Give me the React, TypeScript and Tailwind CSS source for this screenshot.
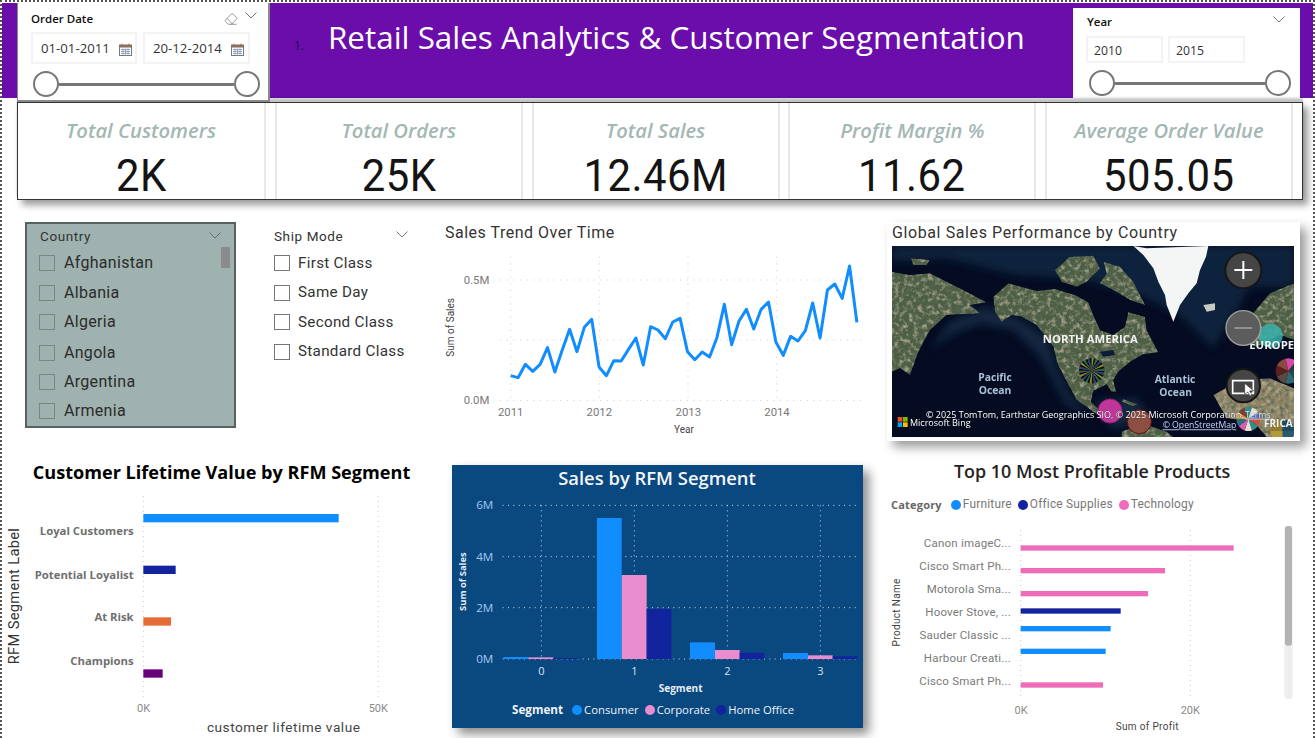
import { Eraser } from "lucide-react";

const din = "font-['Roboto',sans-serif]";
const seg = "font-['Open_Sans',sans-serif]";

const trend = [497, 503, 463, 484, 463, 413, 486, 420, 358, 425, 352, 328, 471, 497, 452, 453, 418, 384, 465, 350, 360, 386, 336, 325, 425, 449, 426, 441, 383, 283, 404, 333, 298, 357, 298, 276, 396, 436, 379, 393, 362, 279, 384, 240, 222, 265, 168, 337];

const kpis = [
  { title: "Total Customers", value: "2K" },
  { title: "Total Orders", value: "25K" },
  { title: "Total Sales", value: "12.46M" },
  { title: "Profit Margin %", value: "11.62" },
  { title: "Average Order Value", value: "505.05" },
];

function Calendar() {
  return (
    <svg width="13" height="13" viewBox="0 0 13 13" className="shrink-0">
      <rect x="0.5" y="2" width="12" height="10.5" fill="#fff" stroke="#777" />
      <rect x="0.5" y="2" width="12" height="2.5" fill="#8a6d5a" />
      <path d="M3 0.5v2M10 0.5v2" stroke="#b5762f" />
      <path d="M2 6.5h9M2 8.5h9M2 10.5h9M4 5.5v6M6.5 5.5v6M9 5.5v6" stroke="#7d95b5" strokeWidth="0.8" />
    </svg>
  );
}

function Thumb() {
  return <div className="w-[26px] h-[26px] rounded-full bg-white border-2 border-[#777] shrink-0" />;
}

function RangeSlider({ width }: { width: number }) {
  return (
    <div className="flex items-center relative" style={{ width }}>
      <Thumb />
      <div className="flex-1 h-[3px] bg-[#777]" />
      <Thumb />
    </div>
  );
}

function Chevron({ className }: { className?: string }) {
  return (
    <svg width="12" height="7" viewBox="0 0 12 7" className={`shrink-0 ${className ?? ""}`}>
      <path d="M0.5 0.5L6 6L11.5 0.5" fill="none" stroke="currentColor" strokeWidth="0.8" />
    </svg>
  );
}

function Header() {
  return (
    <div className="flex h-[95px] mt-px bg-[#6a0dab] items-start">
      <div className="ml-[15px] w-[253px] h-[99px] bg-white border-r-2 border-b-2 border-l border-[#8a8a8a] shrink-0 relative z-10">
        <div className="flex items-center pl-[13px] pr-[11px] pt-[5px] h-[26px]">
          <span className={`${seg} text-[11.5px] font-semibold text-[#111]`}>Order Date</span>
          <Eraser size={14} strokeWidth={1} className="ml-auto text-[#555] mt-[1px]" />
          <Chevron className="ml-[7px] mb-[7px] text-[#555]" />
        </div>
        <div className="flex gap-[6px] pl-[13px] mt-[3px]">
          <div className={`${seg} w-[106px] h-[32px] border-2 border-[#f3f3f3] flex items-center pl-[8px] pt-[2px] gap-[9px] text-[13.2px] text-[#333]`}>
            <span>01-01-2011</span>
            <Calendar />
          </div>
          <div className={`${seg} w-[107px] h-[32px] border-2 border-[#f3f3f3] flex items-center pl-[8px] pt-[2px] gap-[9px] text-[13.2px] text-[#333]`}>
            <span>20-12-2014</span>
            <Calendar />
          </div>
        </div>
        <div className="pl-[15px] mt-[7px]">
          <RangeSlider width={227} />
        </div>
      </div>
      <div className="flex-1 relative h-full flex items-start">
        <span className={`${seg} absolute left-[24px] top-[34px] text-[12px] text-[#1e1040]`}>1.</span>
        <h1 className={`font-['Open_Sans',sans-serif] font-normal text-[31.4px] leading-[46px] text-white mt-[11px] ml-[58px] whitespace-nowrap`}>
          Retail Sales Analytics &amp; Customer Segmentation
        </h1>
      </div>
      <div className="mr-[13px] mt-[5px] w-[227px] h-[90px] bg-white shrink-0">
        <div className="flex items-center pl-[14px] pr-[15px] pt-[3px] h-[24px]">
          <span className={`${seg} text-[11.5px] font-semibold text-[#111]`}>Year</span>
          <Chevron className="ml-auto mb-[5px] text-[#555]" />
        </div>
        <div className="flex gap-[5px] pl-[13px] mt-[4px]">
          <div className={`${seg} w-[77px] h-[27px] border-2 border-[#f3f3f3] flex items-center pl-[6px] pt-[3px] text-[12.2px] text-[#333]`}>2010</div>
          <div className={`${seg} w-[77px] h-[27px] border-2 border-[#f3f3f3] flex items-center pl-[6px] pt-[3px] text-[12.2px] text-[#333]`}>2015</div>
        </div>
        <div className="pl-[16px] mt-[7px]">
          <RangeSlider width={202} />
        </div>
      </div>
    </div>
  );
}

function KpiStrip() {
  return (
    <div className="relative mt-[4px] ml-[15px] w-[1286px] h-[98px] bg-white border border-[#333] flex gap-[8.75px] shadow-[5px_5px_7px_rgba(0,0,0,0.4),0_-4px_2px_rgba(0,0,0,0.22)]">
      {kpis.map((k, i) => (
        <div
          key={k.title}
          className={`w-[248px] flex flex-col items-center border-r-2 border-[#e8e8e8] ${i > 0 ? "border-l-2" : ""}`}
        >
          <div className={`${seg} italic font-semibold text-[20.2px] leading-[26px] mt-[14px] text-[#a3b7b3] whitespace-nowrap`}>
            {k.title}
          </div>
          <div className={`${din} text-[45px] leading-[46px] mt-[10px] text-[#141414] tracking-[0.5px] scale-x-[0.93]`}>{k.value}</div>
        </div>
      ))}
    </div>
  );
}

function Box({ className }: { className: string }) {
  return <div className={`w-[16px] h-[16px] border shrink-0 ${className}`} />;
}

function CountrySlicer() {
  const rows: [string, number][] = [
    ["Afghanistan", 0],
    ["Albania", 30],
    ["Algeria", 59],
    ["Angola", 90],
    ["Argentina", 119],
    ["Armenia", 148],
  ];
  return (
    <div className="relative ml-[23px] w-[211px] h-[206px] bg-[#9fb2af] border-2 border-[#56625f] shrink-0">
      <div className="flex items-center h-[24px] pl-[13px] pr-[13px] pt-[1px]">
        <span className={`${din} text-[13.5px] tracking-[0.6px] text-[#333]`}>Country</span>
        <Chevron className="ml-auto mb-[3px] text-[#56625f]" />
      </div>
      <div className="absolute right-[4px] top-[23px] w-[9px] h-[21px] bg-[#8b8b8b]" />
      {rows.map(([name, y]) => (
        <div key={name} className="absolute left-[12px] flex items-center gap-[9px] h-[20px]" style={{ top: y + 29 }}>
          <Box className="border-[#7d8583]" />
          <span className={`${din} text-[16px] tracking-[0.3px] text-[#2b2b2b]`}>{name}</span>
        </div>
      ))}
    </div>
  );
}

function ShipSlicer() {
  return (
    <div className="ml-[38px] w-[141px] shrink-0 flex flex-col">
      <div className="flex items-center h-[28px] pr-[7px]">
        <span className={`${din} text-[13.5px] tracking-[0.6px] text-[#333]`}>Ship Mode</span>
        <Chevron className="ml-auto mb-[3px] text-[#555]" />
      </div>
      <div className="flex flex-col gap-[9.6px] mt-[3px]">
        {["First Class", "Same Day", "Second Class", "Standard Class"].map((s) => (
          <div key={s} className="flex items-center gap-[8px] h-[20px]">
            <Box className="border-[#777]" />
            <span className={`${din} text-[15.2px] tracking-[0.3px] text-[#333] whitespace-nowrap`}>{s}</span>
          </div>
        ))}
      </div>
    </div>
  );
}

function TrendChart() {
  const pts = trend.map((y, i) => `${242 + i * 22.1},${y}`).join(" ");
  const font = { fontFamily: "Roboto, sans-serif" };
  return (
    <div className="ml-[15px] w-[450px] shrink-0">
      <div className={`${din} pl-[15px] pt-px h-[20px] text-[16px] leading-[20px] tracking-[0.5px] text-[#333]`}>Sales Trend Over Time</div>
      <svg width="450" height="206" viewBox="0 96 1350 618" className="block">
        {[242, 508, 774, 1040].map((x) => (
          <line key={x} x1={x} x2={x} y1="140" y2="570" stroke="#ccc" strokeWidth="3" strokeDasharray="3 17" />
        ))}
        {[210, 390, 571].map((y) => (
          <line key={y} x1="210" x2="1305" y1={y} y2={y} stroke="#ccc" strokeWidth="3" strokeDasharray="3 17" />
        ))}
        <polyline points={pts} fill="none" stroke="#118dff" strokeWidth="9" strokeLinejoin="round" />
        <g style={font} fontSize="34" fill="#777">
          <text x="178" y="221" textAnchor="end">0.5M</text>
          <text x="178" y="582" textAnchor="end">0.0M</text>
          <text x="242" y="617" textAnchor="middle">2011</text>
          <text x="508" y="617" textAnchor="middle">2012</text>
          <text x="775" y="617" textAnchor="middle">2013</text>
          <text x="1041" y="617" textAnchor="middle">2014</text>
        </g>
        <text x="762" y="668" textAnchor="middle" style={font} fontSize="30" fill="#444">Year</text>
        <text transform="translate(72,352) rotate(-90)" textAnchor="middle" style={font} fontSize="30" fill="#444">Sum of Sales</text>
      </svg>
    </div>
  );
}

function Pie({ cx, cy, r, colors }: { cx: number; cy: number; r: number; colors: string[] }) {
  const n = colors.length;
  return (
    <g>
      {colors.map((c, i) => {
        const a0 = (i / n) * Math.PI * 2;
        const a1 = ((i + 1) / n) * Math.PI * 2;
        const d = `M${cx},${cy}L${cx + r * Math.cos(a0)},${cy + r * Math.sin(a0)}A${r},${r} 0 0 1 ${cx + r * Math.cos(a1)},${cy + r * Math.sin(a1)}Z`;
        return <path key={i} d={d} fill={c} />;
      })}
    </g>
  );
}

function MapView() {
  const usColors = Array.from({ length: 36 }, (_, i) => ["#0b0b0b", "#2c3a8a", "#0b0b0b", "#8a8a2a", "#0b0b0b", "#1f6b4a"][i % 6]);
  const mapText = { fontFamily: "Open Sans, sans-serif" };
  return (
    <svg width="402" height="191" viewBox="36 93 1206 573" className="block">
      <defs>
        <filter id="land" x="0" y="0" width="100%" height="100%">
          <feTurbulence type="fractalNoise" baseFrequency="0.07" numOctaves="4" seed="4" result="n" />
          <feColorMatrix in="n" values="0 0 0 0 0.08  0 0 0 0 0.12  0 0 0 0 0.08  2.4 0 0 0 -1.05" result="dark" />
          <feColorMatrix in="n" values="0 0 0 0 0.52  0 0 0 0 0.5  0 0 0 0 0.36  0 2 0 0 -0.95" result="tan" />
          <feMerge result="m">
            <feMergeNode in="SourceGraphic" />
            <feMergeNode in="tan" />
            <feMergeNode in="dark" />
          </feMerge>
          <feComposite in="m" in2="SourceGraphic" operator="in" />
          <feGaussianBlur stdDeviation="1.2" />
        </filter>
        <filter id="soft">
          <feGaussianBlur stdDeviation="12" />
        </filter>
        <filter id="tiny">
          <feGaussianBlur stdDeviation="1.5" />
        </filter>
      </defs>
      <rect x="36" y="93" width="1206" height="573" fill="#050c22" />
      <g filter="url(#soft)" fill="#17344f">
        <path d="M36 93H1242V215H1110L1000 400 900 300 780 240 600 190 400 180 200 130 36 140Z" opacity="0.6" />
        <path d="M320 275L420 315 500 365 525 445 570 540 630 600 560 570 480 425 400 345 300 325 220 355 150 405 210 320Z" opacity="0.7" />
        <path d="M640 560L770 550 810 610 700 640Z" opacity="0.7" />
      </g>
      <g filter="url(#land)" fill="#4e5f43">
        <path d="M36 170L90 180 150 175 230 215 320 262 270 270 300 295 200 300 150 345 115 410 90 480 60 460 36 470Z" />
        <path d="M340 245L385 205 470 228 525 222 585 240 625 262 640 300 660 345 700 360 735 335 745 292 795 305 800 345 835 412 790 418 750 440 715 470 700 495 708 530 695 530 680 508 640 528 632 560 665 590 715 612 690 622 640 590 590 555 555 490 532 445 520 395 470 330 425 305 395 300 365 320 345 290Z" />
        <path d="M525 165L570 125 640 122 660 160 620 200 590 215 545 200Z" />
        <path d="M670 140L720 155 760 200 795 270 750 255 700 225 660 205 680 175Z" />
        <path d="M1115 300L1170 235 1242 205 1242 375 1200 360 1130 395 1090 380Z" />
        <path d="M1000 540L1080 495 1170 490 1242 520 1242 666 1160 666 1120 620 1040 610Z" fill="#8f8565" />
        <path d="M725 650L790 625 860 650 880 666H725Z" />
        <path d="M92 130L150 135 140 150 100 150Z" />
        <path d="M728 552L772 568 760 574 726 560Z" />
      </g>
      <path d="M760 93L800 100 985 93 978 125 960 165 950 205 925 235 900 270 880 320 872 300 860 270 855 240 835 200 820 160 790 120Z" fill="#f4f5f5" filter="url(#tiny)" />
      <path d="M970 270L1005 265 1005 285 980 290Z" fill="#c6cabf" filter="url(#tiny)" />
      <path d="M660 410L700 405 705 420 670 425Z" fill="#0d1d38" filter="url(#tiny)" />
      <Pie cx={635} cy={467} r={38} colors={usColors} />
      <circle cx="1172" cy="362" r="36" fill="#37b3ac" opacity="0.85" />
      <circle cx="690" cy="588" r="36" fill="#bd3698" stroke="#9b1c7a" strokeWidth="3" />
      <circle cx="778" cy="620" r="36" fill="#8c4f42" stroke="#5d1313" strokeWidth="3" />
      <circle cx="835" cy="668" r="8" fill="#3eaa4a" />
      <Pie cx={1225} cy={468} r={38} colors={["#1f4a5e", "#2f6a6e", "#5b4a44", "#5c1f20", "#8a4a3e", "#d848a8", "#2c3a3a"]} />
      <Pie cx={1105} cy={612} r={36} colors={["#d64d3e", "#2b8f8a", "#e8dfcf", "#d95fb0", "#2a6f86", "#e1a13c", "#7a3f35", "#2b8f8a", "#e8dfcf", "#5a6aa8"]} />
      <Pie cx={1207} cy={648} r={36} colors={["#2a5a6e", "#b59a3c", "#8f7a30", "#1f4a5e"]} />
      <g style={mapText} fontWeight="700" textAnchor="middle">
        <text x="631" y="385" fontSize="34" fill="#f2f2f2">NORTH AMERICA</text>
        <text x="1175" y="403" fontSize="34" fill="#f2f2f2">EUROPE</text>
        <g fontSize="31" fill="#a9c1d6">
          <text x="345" y="499">Pacific</text>
          <text x="345" y="537">Ocean</text>
          <text x="885" y="505">Atlantic</text>
          <text x="887" y="544">Ocean</text>
        </g>
        <text x="1195" y="637" fontSize="30" fill="#f2f2f2">FRICA</text>
      </g>
      <g style={mapText} fontSize="27" fill="#fff" stroke="#111" strokeWidth="1" paintOrder="stroke">
        <text x="138" y="608">© 2025 TomTom, Earthstar Geographics SIO, © 2025 Microsoft Corporation,</text>
        <text x="90" y="633">Microsoft Bing</text>
      </g>
      <g style={mapText} fontSize="26" fill="#c9d4f5" textDecoration="underline">
        <text x="1095" y="608">Terms</text>
        <text x="848" y="640">© OpenStreetMap</text>
      </g>
      <rect x="53" y="606" width="14" height="14" fill="#f25022" />
      <rect x="69" y="606" width="14" height="14" fill="#7fba00" />
      <rect x="53" y="622" width="14" height="14" fill="#00a4ef" />
      <rect x="69" y="622" width="14" height="14" fill="#ffb900" />
      <circle cx="1090" cy="166" r="54" fill="#454545" stroke="#161616" strokeWidth="6" />
      <path d="M1090 138v54M1063 165h54" stroke="#fff" strokeWidth="6" />
      <circle cx="1090" cy="339" r="52" fill="#5c5c5c" stroke="#a0a0a0" strokeWidth="4" />
      <path d="M1063 339h54" stroke="#8f8f8f" strokeWidth="6" />
      <circle cx="1090" cy="512" r="50" fill="#454545" stroke="#161616" strokeWidth="6" />
      <path d="M1058 497h62v38h-62Z" fill="none" stroke="#fff" strokeWidth="5" />
      <path d="M1094 505l0 34 9-8 7 12 6-3-7-12 12-1Z" fill="#fff" stroke="#333" strokeWidth="2" />
    </svg>
  );
}

function MapCard() {
  return (
    <div className="ml-[7px] w-[413px] h-[219px] bg-white shadow-[6px_6px_10px_rgba(0,0,0,0.4)] shrink-0">
      <div className={`${din} pl-[5px] pt-[1px] h-[24px] text-[16px] leading-[20px] tracking-[0.6px] text-[#333] whitespace-nowrap`}>
        Global Sales Performance by Country
      </div>
      <div className="ml-[5px]">
        <MapView />
      </div>
    </div>
  );
}

function ClvChart() {
  const din2 = { fontFamily: "Roboto, sans-serif" };
  const open = { fontFamily: "Open Sans, sans-serif" };
  const bars = [
    { w: 586, y: 192, c: "#118dff" },
    { w: 97, y: 347, c: "#12239e" },
    { w: 83, y: 502, c: "#e66c37" },
    { w: 58, y: 658, c: "#6b007b" },
  ];
  return (
    <div className="w-[438px] shrink-0">
      <div className={`${seg} pt-[10px] pl-px text-center text-[18.1px] leading-[24px] font-bold text-black whitespace-nowrap`}>
        Customer Lifetime Value by RFM Segment
      </div>
      <svg width="438" height="254" viewBox="6 102 1314 762" className="block">
        {[430, 1135].map((x) => (
          <line key={x} x1={x} x2={x} y1="138" y2="745" stroke="#ccc" strokeWidth="3" strokeDasharray="3 12" />
        ))}
        {bars.map((b) => (
          <rect key={b.y} x="430" y={b.y} width={b.w} height="25" fill={b.c} />
        ))}
        <g style={open} fontSize="34" fontWeight="700" fill="#6f6f6f" textAnchor="end">
          <text x="401" y="254">Loyal Customers</text>
          <text x="401" y="386">Potential Loyalist</text>
          <text x="401" y="514">At Risk</text>
          <text x="401" y="646">Champions</text>
        </g>
        <g style={din2} fontSize="33" fill="#8a8a8a" textAnchor="middle">
          <text x="431" y="786">0K</text>
          <text x="1135" y="786">50K</text>
        </g>
        <text x="851" y="845" textAnchor="middle" style={din2} fontSize="41" letterSpacing="1.5" fill="#444">customer lifetime value</text>
        <text transform="translate(56,438) rotate(-90)" textAnchor="middle" style={din2} fontSize="44" letterSpacing="1" fill="#333">RFM Segment Label</text>
      </svg>
    </div>
  );
}

function SegmentCard() {
  const font = { fontFamily: "Open Sans, sans-serif" };
  const bars = [
    [190, 606, 75, "#118dff"],
    [265, 607, 75, "#ea8dce"],
    [340, 609, 75, "#12239e"],
    [471, 189, 74, "#118dff"],
    [545, 360, 75, "#ea8dce"],
    [620, 462, 74, "#12239e"],
    [750, 562, 75, "#118dff"],
    [825, 585, 74, "#ea8dce"],
    [899, 593, 74, "#12239e"],
    [1029, 594, 75, "#118dff"],
    [1104, 601, 74, "#ea8dce"],
    [1178, 604, 75, "#12239e"],
  ] as const;
  const legend = [
    { name: "Consumer", c: "bg-[#118dff]" },
    { name: "Corporate", c: "bg-[#ea8dce]" },
    { name: "Home Office", c: "bg-[#12239e]" },
  ];
  return (
    <div className="ml-[12px] mt-[15px] w-[411px] h-[263px] bg-[#0a4880] shadow-[6px_6px_10px_rgba(0,0,0,0.45)] shrink-0">
      <div className={`${seg} h-[24px] pt-[1px] pr-[1px] text-center text-[18.4px] leading-[24px] font-semibold text-[#f4f6f8]`}>
        Sales by RFM Segment
      </div>
      <svg width="411" height="207" viewBox="36 102 1233 621" className="block">
        {[151, 305, 458, 612].map((y) => (
          <line key={y} x1="188" x2="1254" y1={y} y2={y} stroke="#c9d6e2" strokeWidth="3" strokeDasharray="3 13" />
        ))}
        {[304, 583, 862, 1141].map((x) => (
          <line key={x} x1={x} x2={x} y1="151" y2="612" stroke="#c9d6e2" strokeWidth="3" strokeDasharray="3 12" />
        ))}
        {bars.map(([x, y, w, c]) => (
          <rect key={x} x={x} y={y} width={w} height={612 - y} fill={c} />
        ))}
        <g style={font} fontSize="35" fill="#a5c9ef" textAnchor="end">
          <text x="160" y="163">6M</text>
          <text x="160" y="317">4M</text>
          <text x="160" y="470">2M</text>
          <text x="160" y="624">0M</text>
        </g>
        <g style={font} fontSize="33" fill="#d5e2ef" textAnchor="middle">
          <text x="304" y="660">0</text>
          <text x="583" y="660">1</text>
          <text x="862" y="660">2</text>
          <text x="1141" y="660">3</text>
        </g>
        <text x="722" y="710" textAnchor="middle" style={font} fontSize="30" fontWeight="700" fill="#e6edf4">Segment</text>
        <text transform="translate(79,380) rotate(-90)" textAnchor="middle" style={font} fontSize="28" fontWeight="700" fill="#e6edf4">Sum of Sales</text>
      </svg>
      <div className={`${seg} flex items-center pl-[60px] h-[28px] text-[11.3px] text-[#eef2f6]`}>
        <span className="font-bold text-[11.7px] mr-[9px]">Segment</span>
        {legend.map((l) => (
          <div key={l.name} className="flex items-center mr-[6px]">
            <span className={`w-[10px] h-[10px] rounded-full mr-[2px] ${l.c}`} />
            <span>{l.name}</span>
          </div>
        ))}
      </div>
    </div>
  );
}

function ProductsChart() {
  const din2 = { fontFamily: "Roboto, sans-serif" };
  const bars = [
    { w: 639, y: 271, c: "#ee6cba", l: "Canon imageC...", ly: 276 },
    { w: 433, y: 339, c: "#ee6cba", l: "Cisco Smart Ph...", ly: 344 },
    { w: 382, y: 408, c: "#ee6cba", l: "Motorola Sma...", ly: 413 },
    { w: 300, y: 460, c: "#12239e", l: "Hoover Stove, ...", ly: 482 },
    { w: 270, y: 513, c: "#118dff", l: "Sauder Classic ...", ly: 552 },
    { w: 255, y: 581, c: "#118dff", l: "Harbour Creati...", ly: 620 },
    { w: 247, y: 682, c: "#ee6cba", l: "Cisco Smart Ph...", ly: 689 },
  ];
  const legend = [
    { name: "Furniture", c: "bg-[#118dff]" },
    { name: "Office Supplies", c: "bg-[#12239e]" },
    { name: "Technology", c: "bg-[#ee6cba]" },
  ];
  return (
    <div className="ml-[17px] w-[435px] shrink-0">
      <div className={`${seg} pt-[9px] pl-[74px] text-[17.9px] leading-[24px] font-semibold text-[#252423] whitespace-nowrap`}>
        Top 10 Most Profitable Products
      </div>
      <div className={`${din} flex items-center mt-[11px] pl-[11px] h-[22px] text-[11.9px] tracking-[0.2px] text-[#777]`}>
        <span className={`${seg} font-bold text-[11px] mr-[9px] text-[#666]`}>Category</span>
        {legend.map((l) => (
          <div key={l.name} className="flex items-center mr-[6px]">
            <span className={`w-[10px] h-[10px] rounded-full mr-[2px] ${l.c}`} />
            <span>{l.name}</span>
          </div>
        ))}
      </div>
      <svg width="425" height="219" viewBox="0 192 1275 657" className="block mt-[3px]">
        {[422, 931].map((x) => (
          <line key={x} x1={x} x2={x} y1="225" y2="735" stroke="#ccc" strokeWidth="3" strokeDasharray="3 12" />
        ))}
        {bars.map((b) => (
          <rect key={b.y} x="422" y={b.y} width={b.w} height="16" fill={b.c} />
        ))}
        <g style={din2} fontSize="34.5" fill="#7a7a7a" textAnchor="end" letterSpacing="0.6">
          {bars.map((b) => (
            <text key={b.ly} x="393" y={b.ly}>{b.l}</text>
          ))}
        </g>
        <g style={din2} fontSize="33" fill="#8a8a8a" textAnchor="middle">
          <text x="423" y="776">0K</text>
          <text x="931" y="776">20K</text>
        </g>
        <text x="802" y="826" textAnchor="middle" style={din2} fontSize="30" letterSpacing="1" fill="#444">Sum of Profit</text>
        <text transform="translate(60,472) rotate(-90)" textAnchor="middle" style={din2} fontSize="30" letterSpacing="1" fill="#444">Product Name</text>
        <rect x="1213" y="213" width="25" height="519" rx="10" fill="#eeeeee" />
        <rect x="1215" y="213" width="21" height="359" rx="9" fill="#b3b3b3" />
      </svg>
    </div>
  );
}

export default function App() {
  return (
    <div className="w-[1315px] h-[738px] overflow-hidden bg-white border-t-2 border-l-2 border-r-2 border-dotted border-[#555]">
      <Header />
      <KpiStrip />
      <div className="flex items-start mt-[22px] h-[228px]">
        <CountrySlicer />
        <ShipSlicer />
        <TrendChart />
        <MapCard />
      </div>
      <div className="flex items-start">
        <ClvChart />
        <SegmentCard />
        <ProductsChart />
      </div>
    </div>
  );
}
